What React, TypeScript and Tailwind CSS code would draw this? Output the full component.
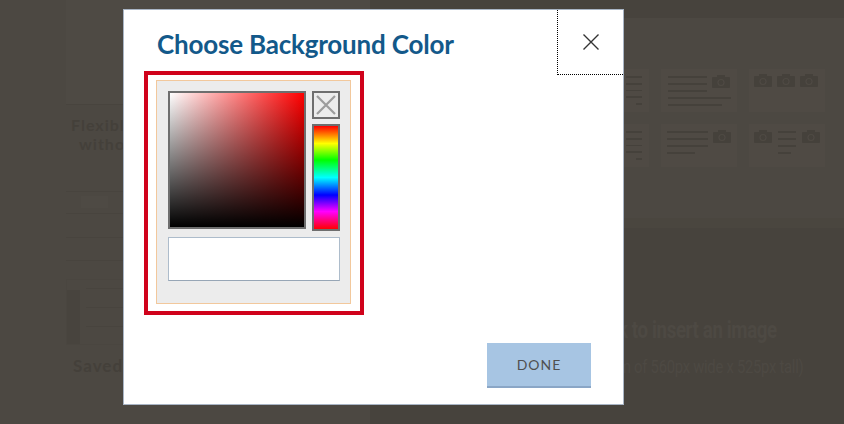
import React from 'react'

const Camera = () => (
  <svg width="18" height="13" viewBox="0 0 18 13">
    <rect x="0" y="2" width="18" height="11" rx="1" fill="#45413b" />
    <rect x="5" y="0" width="8" height="3" fill="#45413b" />
    <circle cx="9" cy="7.5" r="3.6" fill="#4f4a44" />
    <circle cx="9" cy="7.5" r="2.4" fill="#45413b" />
  </svg>
)

const Line = ({ w }: { w: string }) => <div className={'h-[2px] bg-[#45413b] ' + w} />

function TemplateCards() {
  return (
    <div className="flex flex-col gap-[12px] items-end pr-[19px] pt-[51px]">
      <div className="flex gap-[12px]">
        <div className="w-[76px] h-[43px] bg-[#4f4a44] p-[7px] flex flex-col gap-[5px] items-end">
          <Line w="w-[16px]" /><Line w="w-[16px]" /><Line w="w-[16px]" /><Line w="w-[16px]" /><Line w="w-[6px]" />
        </div>
        <div className="w-[76px] h-[43px] bg-[#4f4a44] px-[7px] pt-[6px] flex flex-col gap-[5px]">
          <div className="flex justify-between">
            <div className="flex flex-col gap-[5px] pt-[1px]"><Line w="w-[39px]" /><Line w="w-[39px]" /><Line w="w-[39px]" /></div>
            <Camera />
          </div>
          <Line w="w-[63px]" /><Line w="w-[54px]" />
        </div>
        <div className="w-[76px] h-[43px] bg-[#4f4a44] px-[5px] pt-[5px] flex gap-[5px]">
          <Camera /><Camera /><Camera />
        </div>
      </div>
      <div className="flex gap-[12px]">
        <div className="w-[76px] h-[43px] bg-[#4f4a44] p-[7px] flex flex-col gap-[5px] items-end">
          <Line w="w-[16px]" /><Line w="w-[16px]" /><Line w="w-[16px]" /><Line w="w-[16px]" /><Line w="w-[6px]" />
        </div>
        <div className="w-[76px] h-[43px] bg-[#4f4a44] px-[6px] pt-[6px] flex justify-between">
          <div className="flex flex-col gap-[5px] pt-[1px]"><Line w="w-[41px]" /><Line w="w-[41px]" /><Line w="w-[41px]" /><Line w="w-[28px]" /></div>
          <Camera />
        </div>
        <div className="w-[76px] h-[43px] bg-[#4f4a44] px-[5px] pt-[6px] flex justify-between">
          <Camera />
          <div className="flex flex-col gap-[5px] pt-[1px]"><Line w="w-[18px]" /><Line w="w-[18px]" /><Line w="w-[18px]" /><Line w="w-[13px]" /></div>
          <Camera />
        </div>
      </div>
    </div>
  )
}

function Background() {
  return (
    <div className="flex h-full">
      <div className="w-[375px] bg-[#4c4842] pl-[66px] flex flex-col" style={{ fontFamily: 'Lato, sans-serif' }}>
        <div className="h-[105px] bg-[#4e4a44] border-b border-[#48443e]" />
        <div className="mt-[10px] text-[16px] font-bold tracking-[1px] text-[#44403a] leading-[19px] pl-[5px]">Flexible layouts</div>
        <div className="text-[16px] font-bold tracking-[1px] text-[#44403a] leading-[19px] pl-[13px]">without coding</div>
        <div className="mt-[38px] border-t border-[#48443e]" />
        <div className="mt-[4px] ml-[15px] w-[27px] h-[12px] bg-[#4e4a44]" />
        <div className="mt-[5px] border-t border-[#48443e]" />
        <div className="mt-[23px] border-t border-[#48443e]" />
        <div className="mt-[22px] border-t border-[#48443e]" />
        <div className="mt-[18px] h-[66px] flex gap-[6px] border border-[#4a4640]">
          <div className="w-[13px] mt-[10px] bg-[#48443e]" />
          <div className="flex-1 flex flex-col gap-[18px] pt-[8px]">
            <div className="border-t border-[#48443e]" />
            <div className="border-t border-[#48443e]" />
            <div className="border-t border-[#48443e]" />
          </div>
        </div>
        <div className="mt-[8px] pl-[7px] text-[17px] font-bold tracking-[1px] text-[#44403a]">Saved designs</div>
      </div>
      <div className="flex-1 flex flex-col bg-[#47433d]">
        <div className="h-[18px] bg-[#47433d]" />
        <div className="h-[200px] bg-[#4c4842]">
          <TemplateCards />
        </div>
        <div className="h-[10px] bg-[#4a463f]" />
        <div className="flex-1 flex flex-col pt-[88px] pl-[248px]" style={{ fontFamily: 'Roboto, sans-serif' }}>
          <div className="h-[28px] whitespace-nowrap text-[24px] font-bold text-[#4d4943] leading-[28px] tracking-[-0.5px] origin-left scale-x-[0.78]">k to insert an image</div>
          <div className="h-[22px] mt-[12px] whitespace-nowrap text-[18px] text-[#4d4943] leading-[22px] tracking-[-0.3px] origin-left scale-x-[0.82]">m of 560px wide x 525px tall)</div>
        </div>
      </div>
    </div>
  )
}

export default function App() {
  return (
    <div className="relative w-[844px] h-[424px] overflow-hidden bg-[#4c4842]">
      <Background />

      <div className="absolute left-[123px] top-[9px] w-[501px] h-[396px] bg-white border border-[#a9b5c5] flex flex-col px-[20px]">
        <button className="absolute top-0 right-0 w-[66px] h-[65px] border-l border-b border-dotted border-black flex items-center justify-center">
          <svg width="18" height="18" viewBox="0 0 18 18">
            <path d="M1.5 1.5 L16.5 16.5 M16.5 1.5 L1.5 16.5" stroke="#333" strokeWidth="1.4" fill="none" />
          </svg>
        </button>

        <div className="h-[61px] pl-[13px] pt-[19px]">
          <h2 className="text-[26px] font-bold leading-[31px] tracking-[-0.2px] text-[#13598a]" style={{ fontFamily: 'Lato, sans-serif' }}>
            Choose Background Color
          </h2>
        </div>

        <div className="w-[220px] h-[244px] border-4 border-[#d0021b] pt-[5px] pl-[8px] pr-[9px] pb-[7px]">
          <div className="h-full border border-[#f2c89c] bg-[#ececec] pt-[10px] pl-[11px] pr-[10px]">
            <div className="flex gap-[6px]">
              <div className="w-[138px] h-[138px] border-2 border-[#6e6e6e] bg-[linear-gradient(to_top,#000,transparent),linear-gradient(to_right,#fff,#f00)]" />
              <div className="flex flex-col gap-[5px]">
                <button className="w-[28px] h-[28px] border-2 border-[#6e6e6e] bg-[#ececec] flex items-center justify-center">
                  <svg width="22" height="22" viewBox="0 0 22 22">
                    <path d="M2 2 L20 20 M20 2 L2 20" stroke="#9c9c9c" strokeWidth="2.2" fill="none" />
                  </svg>
                </button>
                <div className="w-[28px] h-[107px] border-2 border-[#6e6e6e] bg-[linear-gradient(to_bottom,#f00_0%,#ff0_17%,#0f0_33%,#0ff_50%,#00f_67%,#f0f_83%,#f00_100%)]" />
              </div>
            </div>
            <input className="mt-[6px] w-[172px] h-[44px] bg-white border border-[#adbccb] border-b-[#97a6b6] outline-none" />
          </div>
        </div>

        <div className="mt-auto flex justify-end pr-[12px] pb-[16px]">
          <button className="w-[104px] h-[45px] bg-[#a7c5e3] border-b-2 border-[#8aa6c6] text-[14px] tracking-[1px] text-[#505050]" style={{ fontFamily: 'Lato, sans-serif' }}>
            DONE
          </button>
        </div>
      </div>
    </div>
  )
}
